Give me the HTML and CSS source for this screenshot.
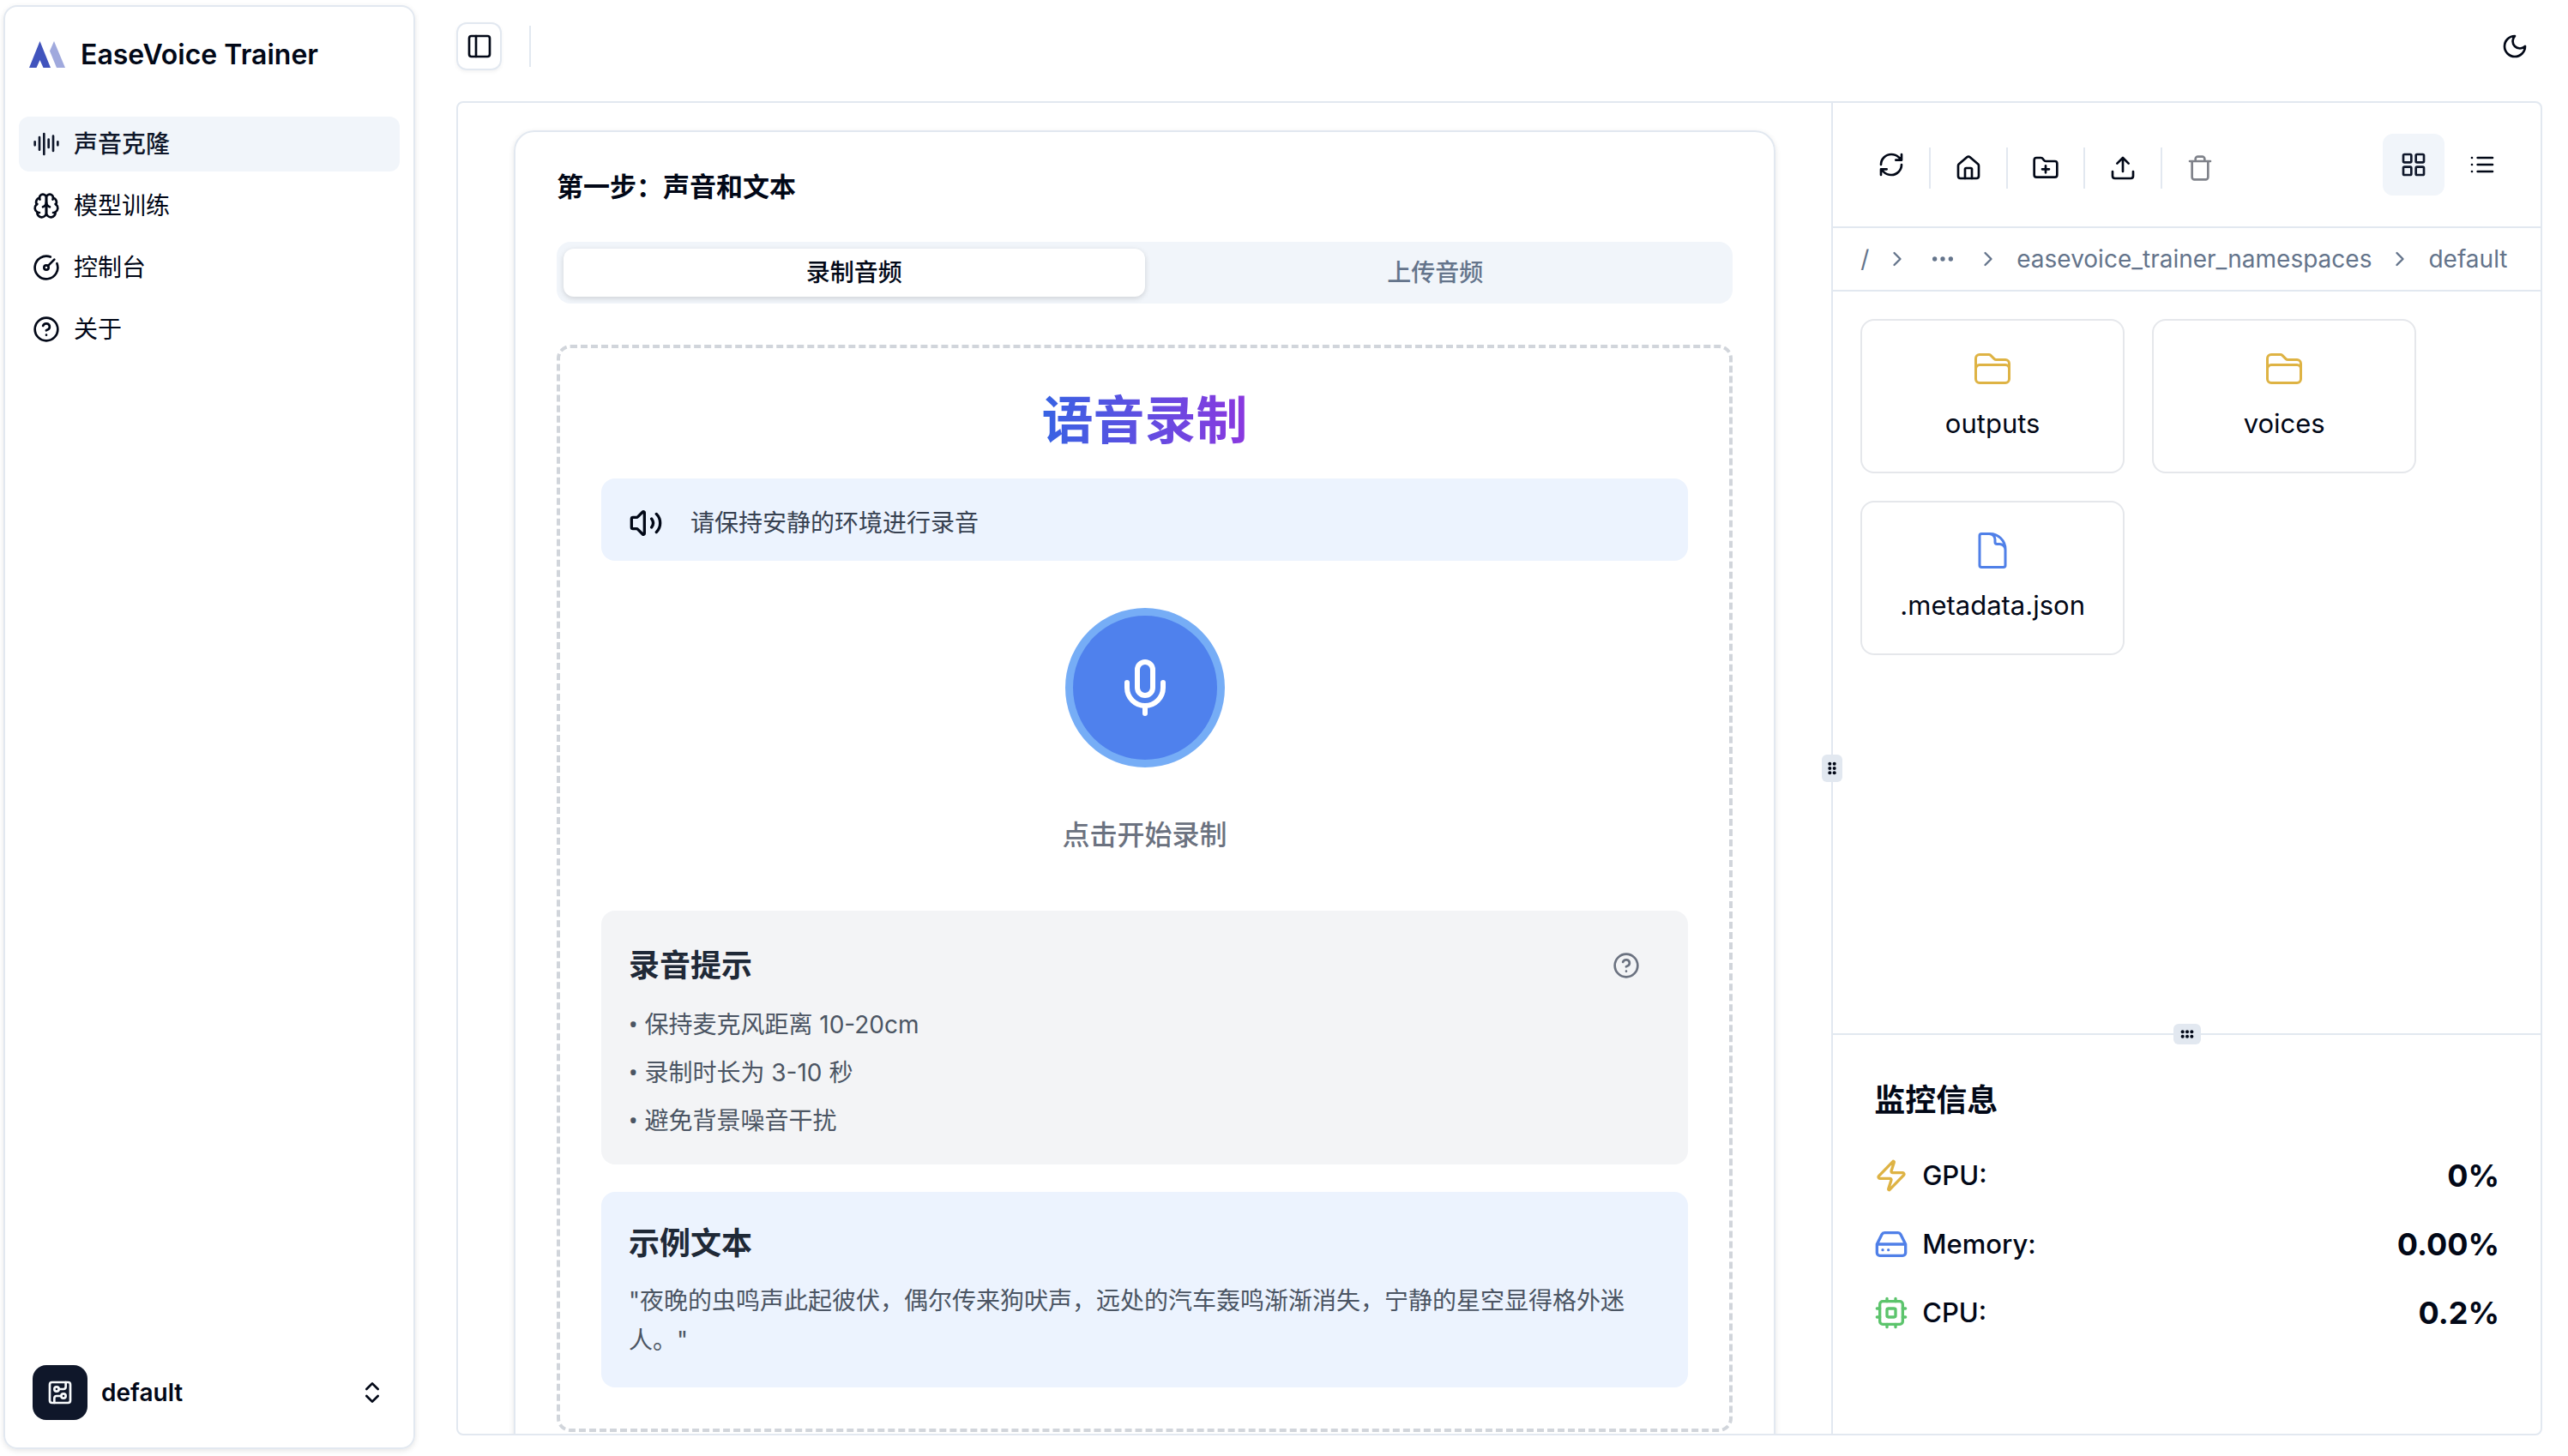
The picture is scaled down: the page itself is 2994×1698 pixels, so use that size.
FILE: index.html
```
<!DOCTYPE html>
<html lang="zh-CN">
<head>
<meta charset="UTF-8" />
<meta name="viewport" content="width=device-width, initial-scale=1.0" />
<title>EaseVoice Trainer</title>
<link rel="stylesheet" href="styles.css">
</head>
<body>

<aside class="sidebar">
  <div class="brand">
    <svg class="logo" viewBox="0 0 42 32" aria-hidden="true">
      <path fill="#4154bd" d="M12.5 0 25 31H16.5L12.5 22 8.500 31H0Z" />
      <path fill="#a0a9dd" d="M29 0 42 31H32L24 11.500Z" />
    </svg>
    <span>EaseVoice Trainer</span>
  </div>

  <nav class="menu">
    <a class="menu-item active" href="#clone">
      <svg class="icon" viewBox="0 0 24 24"><path d="M2 10v3M6 6v11M10 3v18M14 8v7M18 5v13M22 10v3" /></svg>
      <span>声音克隆</span>
    </a>
    <a class="menu-item" href="#train">
      <svg class="icon" viewBox="0 0 24 24"><path d="M12 5a3 3 0 1 0-5.997.125 4 4 0 0 0-2.526 5.770 4 4 0 0 0 .556 6.588A4 4 0 1 0 12 18Z" /><path d="M12 5a3 3 0 1 1 5.997.125 4 4 0 0 1 2.526 5.770 4 4 0 0 1-.556 6.588A4 4 0 1 1 12 18Z" /><path d="M15 13a4.500 4.500 0 0 1-3-4 4.500 4.500 0 0 1-3 4" /><path d="M17.599 6.500a3 3 0 0 0 .399-1.375M6.003 5.125A3 3 0 0 0 6.401 6.500M3.477 10.896a4 4 0 0 1 .585-.396M19.938 10.500a4 4 0 0 1 .585.396M6 18a4 4 0 0 1-1.967-.516M19.967 17.484A4 4 0 0 1 18 18" /></svg>
      <span>模型训练</span>
    </a>
    <a class="menu-item" href="#dashboard">
      <svg class="icon" viewBox="0 0 24 24"><path d="M15.600 2.700a10 10 0 1 0 5.700 5.700" /><circle cx="12" cy="12" r="2" /><path d="M13.400 10.600 19 5" /></svg>
      <span>控制台</span>
    </a>
    <a class="menu-item" href="#about">
      <svg class="icon" viewBox="0 0 24 24"><circle cx="12" cy="12" r="10" /><path d="M9.090 9a3 3 0 0 1 5.830 1c0 2-3 3-3 3M12 17h.01" /></svg>
      <span>关于</span>
    </a>
  </nav>

  <button class="workspace" type="button">
    <span class="workspace-icon">
      <svg class="icon" viewBox="0 0 24 24"><rect width="18" height="18" x="3" y="3" rx="2" /><path d="M11 9h4a2 2 0 0 0 2-2V3" /><circle cx="9" cy="9" r="2" /><path d="M7 21v-4a2 2 0 0 1 2-2h4" /><circle cx="15" cy="15" r="2" /></svg>
    </span>
    <span class="workspace-name">default</span>
    <svg class="icon" viewBox="0 0 24 24"><path d="m7 15 5 5 5-5M7 9l5-5 5 5" /></svg>
  </button>
</aside>

<div class="page">
  <header class="topbar">
    <button class="toggle" type="button" aria-label="切换侧边栏">
      <svg class="icon" viewBox="0 0 24 24"><rect width="18" height="18" x="3" y="3" rx="2" /><path d="M9 3v18" /></svg>
    </button>
    <span class="divider"></span>
    <button class="theme" type="button" aria-label="切换主题">
      <svg class="icon" viewBox="0 0 24 24"><path d="M12 3a6 6 0 0 0 9 9 9 9 0 1 1-9-9Z" /></svg>
    </button>
  </header>

  <div class="panels">
    <main class="work">
      <section class="card">
        <h2 class="card-title">第一步：声音和文本</h2>

        <div class="tabs" role="tablist">
          <button class="tab active" type="button" role="tab" aria-selected="true">录制音频</button>
          <button class="tab" type="button" role="tab" aria-selected="false">上传音频</button>
        </div>

        <div class="recorder">
          <h1 class="headline"><span>语音录制</span></h1>

          <div class="notice">
            <svg class="icon" viewBox="0 0 24 24"><path d="M11 4.702a.705.705 0 0 0-1.203-.498L6.413 7.587A1.400 1.400 0 0 1 5.416 8H3a1 1 0 0 0-1 1v6a1 1 0 0 0 1 1h2.416a1.400 1.400 0 0 1 .997.413l3.383 3.384A.705.705 0 0 0 11 19.298Z" /><path d="M16 9a5 5 0 0 1 0 6M19.364 18.364a9 9 0 0 0 0-12.728" /></svg>
            <p>请保持安静的环境进行录音</p>
          </div>

          <div class="record">
            <button class="mic" type="button" aria-label="录制">
              <svg class="icon" viewBox="0 0 24 24"><path d="M12 2a3 3 0 0 0-3 3v7a3 3 0 0 0 6 0V5a3 3 0 0 0-3-3Z" /><path d="M19 10v2a7 7 0 0 1-14 0v-2M12 19v3" /></svg>
            </button>
            <p class="record-label">点击开始录制</p>
          </div>

          <div class="tips">
            <div class="tips-head">
              <h3>录音提示</h3>
              <button class="help" type="button" aria-label="帮助">
                <svg class="icon" viewBox="0 0 24 24"><circle cx="12" cy="12" r="10" /><path d="M9.090 9a3 3 0 0 1 5.830 1c0 2-3 3-3 3M12 17h.01" /></svg>
              </button>
            </div>
            <ul>
              <li><span class="bullet">•</span> 保持麦克风距离 10-20cm</li>
              <li><span class="bullet">•</span> 录制时长为 3-10 秒</li>
              <li><span class="bullet">•</span> 避免背景噪音干扰</li>
            </ul>
          </div>

          <div class="sample">
            <h3>示例文本</h3>
            <p>"夜晚的虫鸣声此起彼伏，偶尔传来狗吠声，远处的汽车轰鸣渐渐消失，宁静的星空显得格外迷人。"</p>
          </div>
        </div>
      </section>
    </main>

    <div class="handle-v"><span class="grip"><svg viewBox="0 0 24 24"><g fill="currentColor"><circle cx="8" cy="4" r="3" /><circle cx="16" cy="4" r="3" /><circle cx="8" cy="12" r="3" /><circle cx="16" cy="12" r="3" /><circle cx="8" cy="20" r="3" /><circle cx="16" cy="20" r="3" /></g></svg></span></div>

    <div class="side">
      <section class="files">
        <div class="toolbar">
          <button class="tool" type="button" aria-label="刷新">
            <svg class="icon" viewBox="0 0 24 24"><path d="M3 12a9 9 0 0 1 9-9 9.750 9.750 0 0 1 6.740 2.740L21 8M21 3v5h-5M21 12a9 9 0 0 1-9 9 9.750 9.750 0 0 1-6.740-2.740L3 16M8 16H3v5" /></svg>
          </button>
          <div class="file-actions">
            <span class="divider"></span>
            <button class="tool" type="button" aria-label="主目录">
              <svg class="icon" viewBox="0 0 24 24"><path d="M15 21v-8a1 1 0 0 0-1-1h-4a1 1 0 0 0-1 1v8" /><path d="M3 10a2 2 0 0 1 .709-1.528l7-5.999a2 2 0 0 1 2.582 0l7 5.999A2 2 0 0 1 21 10v9a2 2 0 0 1-2 2H5a2 2 0 0 1-2-2z" /></svg>
            </button>
            <span class="divider"></span>
            <button class="tool" type="button" aria-label="新建文件夹">
              <svg class="icon" viewBox="0 0 24 24"><path d="M12 10v6M9 13h6" /><path d="M20 20a2 2 0 0 0 2-2V8a2 2 0 0 0-2-2h-7.900a2 2 0 0 1-1.690-.9L9.600 3.900A2 2 0 0 0 7.930 3H4a2 2 0 0 0-2 2v13a2 2 0 0 0 2 2Z" /></svg>
            </button>
            <span class="divider"></span>
            <button class="tool" type="button" aria-label="上传">
              <svg class="icon" viewBox="0 0 24 24"><path d="M21 15v4a2 2 0 0 1-2 2H5a2 2 0 0 1-2-2v-4M17 8l-5-5-5 5M12 3v12" /></svg>
            </button>
            <span class="divider"></span>
            <button class="tool" type="button" aria-label="删除" disabled>
              <svg class="icon" viewBox="0 0 24 24"><path d="M3 6h18M19 6v14c0 1-1 2-2 2H7c-1 0-2-1-2-2V6M8 6V4c0-1 1-2 2-2h4c1 0 2 1 2 2v2" /></svg>
            </button>
          </div>
          <div class="view-switch">
            <button class="view active" type="button" aria-label="网格视图">
              <svg class="icon" viewBox="0 0 24 24"><rect width="7" height="7" x="3" y="3" rx="1" /><rect width="7" height="7" x="14" y="3" rx="1" /><rect width="7" height="7" x="14" y="14" rx="1" /><rect width="7" height="7" x="3" y="14" rx="1" /></svg>
            </button>
            <button class="view" type="button" aria-label="列表视图">
              <svg class="icon" viewBox="0 0 24 24"><path d="M3 12h.01M3 18h.01M3 6h.01M8 12h13M8 18h13M8 6h13" /></svg>
            </button>
          </div>
        </div>

        <nav class="breadcrumb">
          <a href="#root">/</a>
          <svg class="icon" viewBox="0 0 24 24"><path d="m9 18 6-6-6-6" /></svg>
          <button class="more" type="button" aria-label="更多">
            <svg class="icon" viewBox="0 0 24 24"><circle cx="12" cy="12" r="1" /><circle cx="19" cy="12" r="1" /><circle cx="5" cy="12" r="1" /></svg>
          </button>
          <svg class="icon" viewBox="0 0 24 24"><path d="m9 18 6-6-6-6" /></svg>
          <a href="#namespaces">easevoice_trainer_namespaces</a>
          <svg class="icon" viewBox="0 0 24 24"><path d="m9 18 6-6-6-6" /></svg>
          <a href="#default">default</a>
        </nav>

        <div class="file-grid">
          <button class="file" type="button">
            <svg class="icon folder" viewBox="0 0 24 24"><path d="M2.250 12.750V12A2.250 2.250 0 0 1 4.500 9.750h15A2.250 2.250 0 0 1 21.750 12v.750m-8.690-6.440-2.120-2.120a1.500 1.500 0 0 0-1.061-.440H4.500A2.250 2.250 0 0 0 2.250 6v12a2.250 2.250 0 0 0 2.250 2.250h15A2.250 2.250 0 0 0 21.750 18V9a2.250 2.250 0 0 0-2.250-2.250h-5.379a1.500 1.500 0 0 1-1.060-.440Z" /></svg>
            <span>outputs</span>
          </button>
          <button class="file" type="button">
            <svg class="icon folder" viewBox="0 0 24 24"><path d="M2.250 12.750V12A2.250 2.250 0 0 1 4.500 9.750h15A2.250 2.250 0 0 1 21.750 12v.750m-8.690-6.440-2.120-2.120a1.500 1.500 0 0 0-1.061-.440H4.500A2.250 2.250 0 0 0 2.250 6v12a2.250 2.250 0 0 0 2.250 2.250h15A2.250 2.250 0 0 0 21.750 18V9a2.250 2.250 0 0 0-2.250-2.250h-5.379a1.500 1.500 0 0 1-1.060-.440Z" /></svg>
            <span>voices</span>
          </button>
          <button class="file" type="button">
            <svg class="icon document" viewBox="0 0 24 24"><path d="M19.500 14.250v-2.625a3.375 3.375 0 0 0-3.375-3.375h-1.500A1.125 1.125 0 0 1 13.500 7.125v-1.500a3.375 3.375 0 0 0-3.375-3.375H8.250m2.250 0H5.625c-.621 0-1.125.504-1.125 1.125v17.250c0 .621.504 1.125 1.125 1.125h12.750c.621 0 1.125-.504 1.125-1.125V11.250a9 9 0 0 0-9-9Z" /></svg>
            <span>.metadata.json</span>
          </button>
        </div>
      </section>

      <div class="handle-h"><span class="grip"><svg viewBox="0 0 24 24"><g fill="currentColor"><circle cx="4" cy="8" r="3" /><circle cx="12" cy="8" r="3" /><circle cx="20" cy="8" r="3" /><circle cx="4" cy="16" r="3" /><circle cx="12" cy="16" r="3" /><circle cx="20" cy="16" r="3" /></g></svg></span></div>

      <section class="monitor">
        <h2>监控信息</h2>
        <dl>
          <div class="stat">
            <svg class="icon gpu" viewBox="0 0 24 24"><path d="M4 14a1 1 0 0 1-.780-1.630l9.900-10.200a.5.5 0 0 1 .860.460l-1.920 6.020A1 1 0 0 0 13 10h7a1 1 0 0 1 .780 1.630l-9.900 10.200a.5.5 0 0 1-.860-.460l1.920-6.020A1 1 0 0 0 11 14z" /></svg>
            <dt>GPU:</dt>
            <dd>0%</dd>
          </div>
          <div class="stat">
            <svg class="icon memory" viewBox="0 0 24 24"><path d="M22 12H2M5.450 5.110 2 12v6a2 2 0 0 0 2 2h16a2 2 0 0 0 2-2v-6l-3.450-6.890A2 2 0 0 0 16.760 4H7.240a2 2 0 0 0-1.790 1.110zM6 16h.01M10 16h.01" /></svg>
            <dt>Memory:</dt>
            <dd>0.00%</dd>
          </div>
          <div class="stat">
            <svg class="icon cpu" viewBox="0 0 24 24"><rect width="16" height="16" x="4" y="4" rx="2" /><rect width="6" height="6" x="9" y="9" rx="1" /><path d="M15 2v2M15 20v2M2 15h2M2 9h2M20 15h2M20 9h2M9 2v2M9 20v2" /></svg>
            <dt>CPU:</dt>
            <dd>0.2%</dd>
          </div>
        </dl>
      </section>
    </div>
  </div>
</div>

</body>
</html>
```
FILE: styles.css
```
* { box-sizing: border-box; margin: 0; padding: 0; }
body { display: flex; gap: 48px; height: 100vh; padding: 6px 30px 8px 4px; overflow: hidden; background: #fff; color: #020817; font-family: Inter, "Noto Sans CJK SC", sans-serif; font-size: 28px; line-height: 40px; }
button { border: 0; background: none; color: inherit; font: inherit; cursor: pointer; }
a { color: inherit; text-decoration: none; }
ul { list-style: none; }
.icon { flex: none; display: block; width: 32px; height: 32px; fill: none; stroke: currentColor; stroke-width: 2; stroke-linecap: round; stroke-linejoin: round; }
.divider { width: 2px; height: 48px; background: #e2e8f0; }

/* sidebar */
.sidebar { flex: none; display: flex; flex-direction: column; width: 480px; border: 2px solid #e2e8f0; border-radius: 16px; padding: 0 16px 16px; box-shadow: 0 2px 6px rgba(0, 0, 0, 0.1); }
.brand { display: flex; align-items: center; gap: 18px; height: 112px; padding-left: 12px; font-size: 32px; font-weight: 600; }
.logo { width: 42px; height: 32px; }
.menu { display: flex; flex-direction: column; gap: 8px; padding-top: 16px; }
.menu-item { display: flex; align-items: center; gap: 16px; height: 64px; padding: 0 16px; border-radius: 12px; }
.menu-item.active { background: #f1f5fa; color: #0f172a; font-weight: 500; }
.workspace { display: flex; align-items: center; gap: 16px; margin-top: auto; padding: 16px; text-align: left; }
.workspace-icon { display: flex; align-items: center; justify-content: center; width: 64px; height: 64px; border-radius: 16px; background: #0f172a; color: #f8fafc; }
.workspace-name { flex: 1; font-weight: 600; }

/* top bar */
.page { flex: 1; display: flex; flex-direction: column; min-width: 0; padding-bottom: 16px; }
.topbar { display: flex; align-items: center; height: 112px; padding-bottom: 16px; }
.toggle { display: flex; align-items: center; justify-content: center; width: 53px; height: 56px; border: 2px solid #e2e8f0; border-radius: 12px; box-shadow: 0 2px 4px rgba(0, 0, 0, 0.05); }
.topbar .divider { margin-left: 32px; }
.theme { display: flex; align-items: center; justify-content: center; width: 64px; height: 64px; margin-left: auto; }

.panels { flex: 1; display: grid; grid-template-columns: minmax(0, 66fr) 2px minmax(0, 34fr); grid-template-rows: minmax(0, 1fr); min-height: 0; border: 2px solid #e2e8f0; border-radius: 8px; }
.handle-v, .handle-h { position: relative; background: #e2e8f0; }
.grip { position: absolute; top: 50%; left: 50%; display: flex; align-items: center; justify-content: center; width: 24px; height: 32px; border-radius: 6px; background: #e2e8f0; transform: translate(-50%, -50%); }
.handle-h .grip { width: 32px; height: 24px; }
.grip svg { width: 16px; height: 16px; }

/* recording panel */
.work { padding: 32px 65px 0; overflow: hidden; }
.card { padding: 32px 48px 48px; border: 2px solid #e2e8f0; border-radius: 24px; box-shadow: 0 2px 6px rgba(0, 0, 0, 0.1); }
.card-title { font-size: 31px; font-weight: 600; line-height: 64px; }
.tabs { display: grid; grid-template-columns: 1fr 1fr; height: 72px; margin: 32px 0 48px; padding: 8px; border-radius: 16px; background: #f1f5fa; }
.tab { border-radius: 12px; color: #64748b; font-weight: 500; }
.tab.active { background: #fff; color: #020817; box-shadow: 0 2px 6px rgba(0, 0, 0, 0.15); }
.recorder { padding: 48px; border: 4px dashed #d1d5db; border-radius: 16px; }
.headline { margin-bottom: 32px; font-size: 60px; font-weight: 700; line-height: 72px; text-align: center; }
.headline span { display: inline-block; background: linear-gradient(to right, #3763e3, #8b38df); -webkit-background-clip: text; background-clip: text; color: transparent; }
.notice { display: flex; align-items: center; gap: 32px; padding: 32px 32px 24px; border-radius: 16px; background: #ecf3fe; color: #374151; }
.notice .icon { width: 40px; height: 40px; color: #020817; }
.record { display: flex; flex-direction: column; align-items: center; padding: 55px 0 64px; }
.mic { display: flex; align-items: center; justify-content: center; width: 186px; height: 186px; border: 9px solid #76adf6; border-radius: 50%; background: #4f81ed; color: #fff; }
.mic .icon { width: 72px; height: 72px; }
.record-label { margin-top: 55px; color: #6b7280; font-size: 32px; font-weight: 500; line-height: 48px; }
.tips, .sample { padding: 32px; border-radius: 16px; color: #4b5563; }
.tips { margin-bottom: 32px; background: #f3f4f6; }
.tips-head { display: flex; align-items: center; justify-content: space-between; margin-bottom: 16px; }
.tips h3, .sample h3 { color: #1f2937; font-size: 36px; font-weight: 600; line-height: 56px; }
.help { display: flex; align-items: center; justify-content: center; width: 80px; height: 64px; color: #6b7280; }
.tips ul { display: flex; flex-direction: column; gap: 16px; }
.tips li { height: 40px; }
.bullet { font-family: "Noto Sans", sans-serif; }
.sample { background: #ecf3fe; }
.sample p { margin-top: 16px; line-height: 46px; }

/* file manager */
.side { display: grid; grid-template-rows: minmax(0, 70fr) 2px minmax(0, 30fr); }
.toolbar { display: flex; align-items: center; height: 146px; padding: 0 32px; border-bottom: 2px solid #e2e8f0; }
.tool { display: flex; align-items: center; justify-content: center; width: 88px; height: 64px; }
.toolbar > .tool { margin-left: -8px; }
.tool:disabled { opacity: 0.5; cursor: default; }
.file-actions { display: flex; align-items: center; padding-top: 8px; }
.view-switch { display: flex; gap: 8px; margin-left: auto; }
.view { display: flex; align-items: center; justify-content: center; width: 72px; height: 72px; border-radius: 12px; }
.view.active { background: #f1f5fa; color: #0f172a; }
.breadcrumb { display: flex; align-items: center; gap: 19px; height: 74px; padding: 0 32px; border-bottom: 2px solid #e2e8f0; color: #64748b; }
.breadcrumb .icon { width: 28px; height: 28px; }
.breadcrumb .more { flex: none; display: flex; align-items: center; justify-content: center; width: 40px; height: 32px; }
.breadcrumb .more .icon { width: 32px; height: 32px; }
.file-grid { display: grid; grid-template-columns: repeat(auto-fill, 308px); gap: 32px; padding: 32px; }
.file { display: flex; flex-direction: column; align-items: center; gap: 16px; height: 180px; padding-top: 32px; border: 2px solid #e5e7eb; border-radius: 16px; font-size: 31px; line-height: 48px; }
.file .icon { width: 48px; height: 48px; stroke-width: 1.5; }
.folder, .gpu { color: #deb344; }
.document, .memory { color: #5080e8; }

/* monitor */
.monitor { padding: 48px; }
.monitor h2 { margin-bottom: 32px; font-size: 36px; font-weight: 700; line-height: 56px; }
.monitor dl { display: flex; flex-direction: column; gap: 24px; }
.stat { display: flex; align-items: center; gap: 16px; font-size: 31px; line-height: 56px; }
.stat .icon { width: 40px; height: 40px; }
.stat dt { font-weight: 500; }
.stat dd { margin-left: auto; font-size: 36px; font-weight: 700; }
.cpu { color: #5cc46c; }
```
